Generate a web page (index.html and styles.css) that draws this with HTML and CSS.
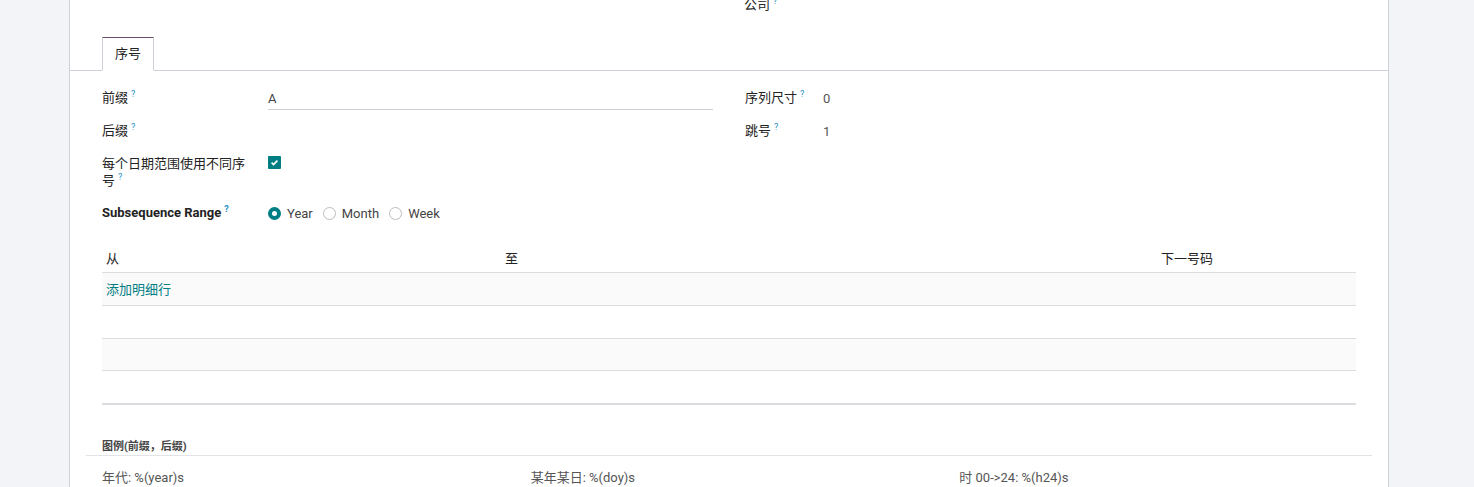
FILE: index.html
```html
<!DOCTYPE html>
<html lang="zh">
<head>
<meta charset="utf-8">
<link rel="stylesheet" href="styles.css">
</head>
<body>
<div class="sheet">
  <div class="top-row">
    <span class="label">公司<sup>?</sup></span>
  </div>
  <div class="tabs">
    <div class="tab">序号</div>
  </div>
  <div class="content">
    <div class="groups">
      <div class="group group-left">
        <div class="label">前缀<sup>?</sup></div>
        <div class="field"><div class="input">A</div></div>
        <div class="label">后缀<sup>?</sup></div>
        <div class="field"></div>
        <div class="label">每个日期范围使用不同序号<sup>?</sup></div>
        <div class="field field-top">
          <span class="checkbox"><svg width="13" height="13" viewBox="0 0 13 13"><rect width="13" height="13" rx="1" fill="#017e84"/><path d="M3.6 6.7 L5.5 8.5 L9.4 4.6" fill="none" stroke="#fff" stroke-width="1.7"/></svg></span>
        </div>
        <div class="label label-bold">Subsequence Range<sup>?</sup></div>
        <div class="field radios">
          <span class="radio radio-on"></span><span class="radio-text">Year</span>
          <span class="radio"></span><span class="radio-text">Month</span>
          <span class="radio"></span><span class="radio-text">Week</span>
        </div>
      </div>
      <div class="group group-right">
        <div class="label">序列尺寸<sup>?</sup></div>
        <div class="field value">0</div>
        <div class="label">跳号<sup>?</sup></div>
        <div class="field value">1</div>
      </div>
    </div>

    <div class="table">
      <div class="trow thead">
        <div class="cell">从</div>
        <div class="cell">至</div>
        <div class="cell cell-right">下一号码</div>
        <div class="cell"></div>
      </div>
      <div class="trow odd"><div class="cell add-line">添加明细行</div></div>
      <div class="trow"></div>
      <div class="trow odd"></div>
      <div class="trow last"></div>
    </div>

    <div class="legend">
      <div class="legend-title">图例(前缀，后缀)</div>
      <div class="legend-items">
        <div class="legend-col">年代: %(year)s</div>
        <div class="legend-col">某年某日: %(doy)s</div>
        <div class="legend-col">时 00-&gt;24: %(h24)s</div>
      </div>
    </div>
  </div>
</div>
</body>
</html>
```

FILE: styles.css
```css
html, body {
  margin: 0;
  padding: 0;
  background: #f3f4f8;
  height: 100%;
  overflow: hidden;
}
body {
  font-family: Roboto, "Noto Sans CJK SC", sans-serif;
  font-size: 13px;
  color: #222;
}
.sheet {
  margin-left: 69px;
  margin-top: -4px;
  width: 1320px;
  box-sizing: border-box;
  background: #fff;
  border-left: 1px solid #cfd1d8;
  border-right: 1px solid #cfd1d8;
  min-height: 600px;
}
.top-row {
  height: 41px;
  padding-left: 674px;
  box-sizing: border-box;
  line-height: 17px;
}
sup {
  font-size: 9px;
  color: #2592c9;
  margin-left: 3px;
  vertical-align: top;
  position: relative;
  top: 1px;
  line-height: 9px;
}
.tabs {
  display: flex;
  padding-left: 32px;
  border-bottom: 1px solid #cfd1d8;
  height: 33px;
}
.tab {
  width: 52px;
  box-sizing: border-box;
  height: 34px;
  border: 1px solid #cfd1d8;
  border-top: 1px solid #6b4b68;
  border-bottom: 1px solid #fff;
  background: #fff;
  text-align: center;
  line-height: 32px;
}
.content {
  padding: 15px 32px 0 32px;
}
.groups {
  display: grid;
  grid-template-columns: 1fr 1fr;
  column-gap: 32px;
}
.group {
  display: grid;
  row-gap: 9px;
  align-content: start;
}
.group-left { grid-template-columns: 166px 1fr; }
.group-right { grid-template-columns: 78px 1fr; }
.label {
  padding: 3px 16px 3px 0;
  line-height: 17px;
}
.label-bold { font-weight: 700; }
.field {
  min-height: 24px;
  display: flex;
  align-items: center;
}
.field-top { align-items: flex-start; padding-top: 4px; }
.value { color: #555; }
.input {
  width: 100%;
  height: 23px;
  box-sizing: border-box;
  border-bottom: 1px solid #cfd1d8;
  line-height: 24px;
  color: #444;
}
.checkbox { display: inline-flex; }
.radio {
  width: 13px;
  height: 13px;
  box-sizing: border-box;
  border-radius: 50%;
  border: 1px solid #b9bcc2;
  background: #fff;
  display: inline-block;
}
.radio-on {
  border: 4px solid #017e84;
  background: #fff;
}
.radio-text {
  margin-left: 6px;
  margin-right: 10px;
  color: #444;
}
.table {
  margin-top: 17px;
}
.trow {
  display: grid;
  grid-template-columns: 399px 1fr 120px 139px;
  height: 32.75px;
  box-sizing: border-box;
  border-bottom: 1px solid #dcdde1;
  align-items: center;
}
.thead {
  height: 31px;
  color: #222;
}
.odd { background: #fafafa; }
.last { border-bottom: 2px solid #dcdde1; height: 33.75px; }
.cell { padding: 0 4px; }
.cell-right { text-align: right; }
.add-line { color: #017e84; }
.legend {
  margin: 34px -16px 0 -16px;
}
.legend-title {
  padding: 0 16px;
  font-size: 11px;
  font-weight: 700;
  color: #444;
  line-height: 16px;
  border-bottom: 1px solid #e2e3e6;
}
.legend-items {
  display: grid;
  grid-template-columns: 1fr 1fr 1fr;
  padding-top: 13px;
}
.legend-col {
  padding: 0 16px;
  color: #555;
  line-height: 17px;
}
```
